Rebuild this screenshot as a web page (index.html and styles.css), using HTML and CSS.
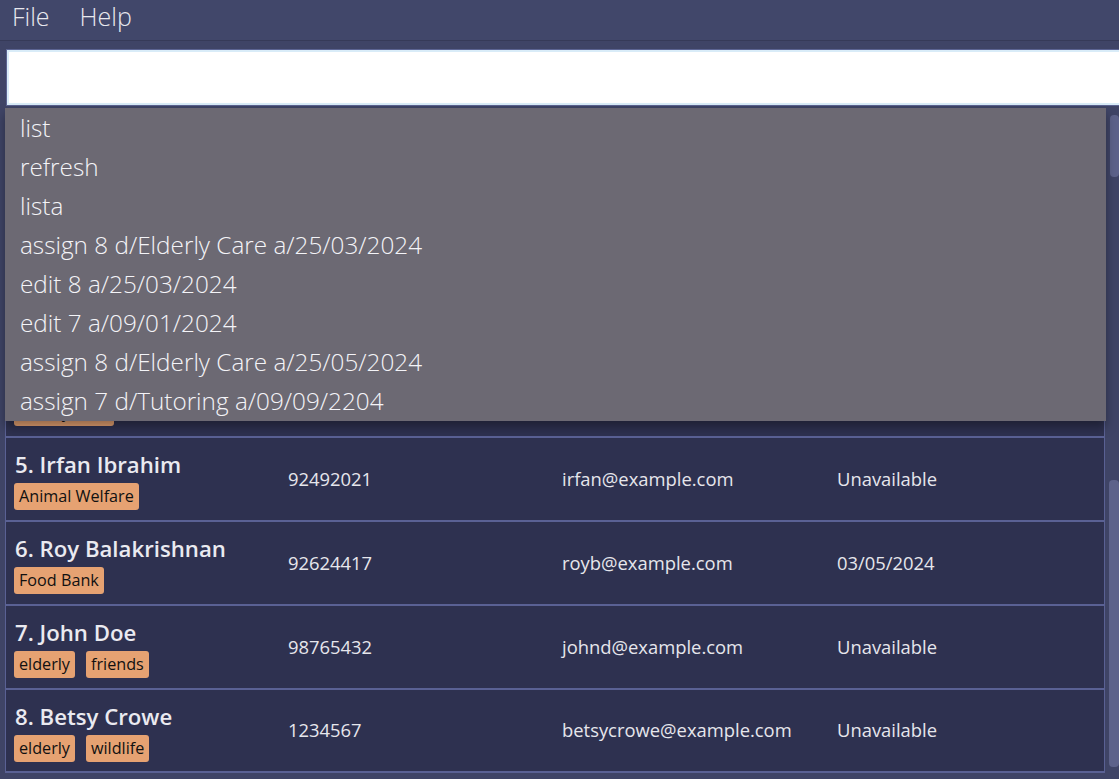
FILE: index.html
```html
<!DOCTYPE html>
<html>
<head>
<meta charset="utf-8">
<link rel="stylesheet" href="styles.css">
</head>
<body>
<div class="app">
  <div class="menubar">
    <span class="menu-item">File</span>
    <span class="menu-item">Help</span>
  </div>
  <div class="main">
    <div class="command-wrap">
      <div class="command-box"><input class="command-input" type="text" value=""></div>
    </div>
    <div class="result-panel">
      <div class="result-text"></div>
      <div class="scroll-track"><div class="scroll-thumb result-thumb"></div></div>
    </div>
    <div class="list-panel">
      <div class="list-view">
        <div class="row">
          <div class="cell-name"><div class="name">4. David Li</div><div class="tags"><span class="tag">Elderly Care</span></div></div>
          <div class="cell">91031282</div><div class="cell">lidavid@example.com</div><div class="cell">25/03/2024</div>
        </div>
        <div class="row">
          <div class="cell-name"><div class="name">5. Irfan Ibrahim</div><div class="tags"><span class="tag">Animal Welfare</span></div></div>
          <div class="cell">92492021</div><div class="cell">irfan@example.com</div><div class="cell">Unavailable</div>
        </div>
        <div class="row">
          <div class="cell-name"><div class="name">6. Roy Balakrishnan</div><div class="tags"><span class="tag">Food Bank</span></div></div>
          <div class="cell">92624417</div><div class="cell">royb@example.com</div><div class="cell">03/05/2024</div>
        </div>
        <div class="row">
          <div class="cell-name"><div class="name">7. John Doe</div><div class="tags"><span class="tag">elderly</span><span class="tag">friends</span></div></div>
          <div class="cell">98765432</div><div class="cell">johnd@example.com</div><div class="cell">Unavailable</div>
        </div>
        <div class="row last">
          <div class="cell-name"><div class="name">8. Betsy Crowe</div><div class="tags"><span class="tag">elderly</span><span class="tag">wildlife</span></div></div>
          <div class="cell">1234567</div><div class="cell">betsycrowe@example.com</div><div class="cell">Unavailable</div>
        </div>
      </div>
      <div class="scroll-track list-track"><div class="scroll-thumb list-thumb"></div></div>
    </div>
  </div>
  <ul class="dropdown">
    <li>list</li>
    <li>refresh</li>
    <li>lista</li>
    <li>assign 8 d/Elderly Care a/25/03/2024</li>
    <li>edit 8 a/25/03/2024</li>
    <li>edit 7 a/09/01/2024</li>
    <li>assign 8 d/Elderly Care a/25/05/2024</li>
    <li>assign 7 d/Tutoring a/09/09/2204</li>
  </ul>
</div>
</body>
</html>
```

FILE: styles.css
```css
* { box-sizing: border-box; }
html, body {
  margin: 0;
  padding: 0;
  width: 1119px;
  height: 779px;
  overflow: hidden;
  background: #3f4466;
  font-family: "Open Sans", "Noto Sans", sans-serif;
}
.app {
  position: relative;
  width: 1119px;
  height: 779px;
  display: flex;
  flex-direction: column;
}
.menubar {
  height: 41px;
  background: #41476a;
  border-bottom: 1px solid #363a58;
  display: flex;
  align-items: flex-start;
  padding-left: 12px;
  padding-top: 0;
  gap: 30px;
  flex-shrink: 0;
}
.menu-item {
  color: #e8e8ee;
  font-weight: 300;
  font-size: 25px;
  line-height: 32px;
}
.main {
  flex: 1;
  display: flex;
  flex-direction: column;
  padding: 8px 0 6px 5px;
  min-height: 0;
}
.command-wrap {
  margin-left: 1px;
  margin-right: -20px;
  flex-shrink: 0;
}
.command-box {
  height: 57px;
  border: 1px solid #5b6391;
  background: #ffffff;
  box-shadow: inset 0 0 0 2px #d9ecf8;
}
.command-input {
  width: 100%;
  height: 100%;
  border: none;
  outline: none;
  background: transparent;
}
.result-panel {
  height: 160px;
  flex-shrink: 0;
  display: flex;
  margin-top: 2px;
}
.result-text { flex: 1; }
.scroll-track {
  width: 14px;
  flex-shrink: 0;
  display: flex;
  flex-direction: column;
  padding-left: 5px;
}
.scroll-thumb {
  background: #5d628a;
  border-radius: 4px;
}
.result-thumb {
  margin-top: 7px;
  height: 62px;
}
.list-panel {
  flex: 1;
  min-height: 0;
  display: flex;
}
.list-view {
  flex: 1;
  min-height: 0;
  overflow: hidden;
  display: flex;
  flex-direction: column;
  justify-content: flex-end;
}
.list-track {
  padding-top: 212px;
  padding-bottom: 6px;
  padding-left: 4px;
}
.list-thumb { height: 287px; }
.row {
  flex-shrink: 0;
  height: 84px;
  background: #2e3150;
  border: 1px solid #5a6194;
  border-top-width: 2px;
  border-bottom: none;
  display: grid;
  grid-template-columns: 274px 274px 275px 1fr;
  align-items: center;
  padding-left: 8px;
}
.row.last {
  height: 85px;
  border-bottom: 2px solid #5a6194;
}
.cell-name {
  display: flex;
  flex-direction: column;
  gap: 5px;
  padding-top: 4px;
}
.name {
  color: #eaeaf0;
  font-weight: 600;
  font-size: 22.2px;
  line-height: 26px;
  padding-left: 1px;
}
.tags {
  display: flex;
  gap: 11px;
}
.tag {
  background: #e6a272;
  color: #111111;
  font-size: 16.2px;
  line-height: 27px;
  height: 27px;
  padding: 0 5px;
  border-radius: 3px;
}
.cell {
  color: #e6e6ec;
  font-size: 18.4px;
  font-weight: 400;
  margin-top: -2px;
}
.dropdown {
  position: absolute;
  top: 108px;
  left: 5px;
  width: 1101px;
  height: 313px;
  margin: 0;
  padding: 0;
  list-style: none;
  background: #6c6973;
  box-shadow: 0 6px 10px rgba(0, 0, 0, 0.35);
}
.dropdown li {
  height: 39px;
  line-height: 39px;
  padding-left: 15px;
  color: #f4f4f8;
  font-weight: 300;
  font-size: 24.3px;
}
```
